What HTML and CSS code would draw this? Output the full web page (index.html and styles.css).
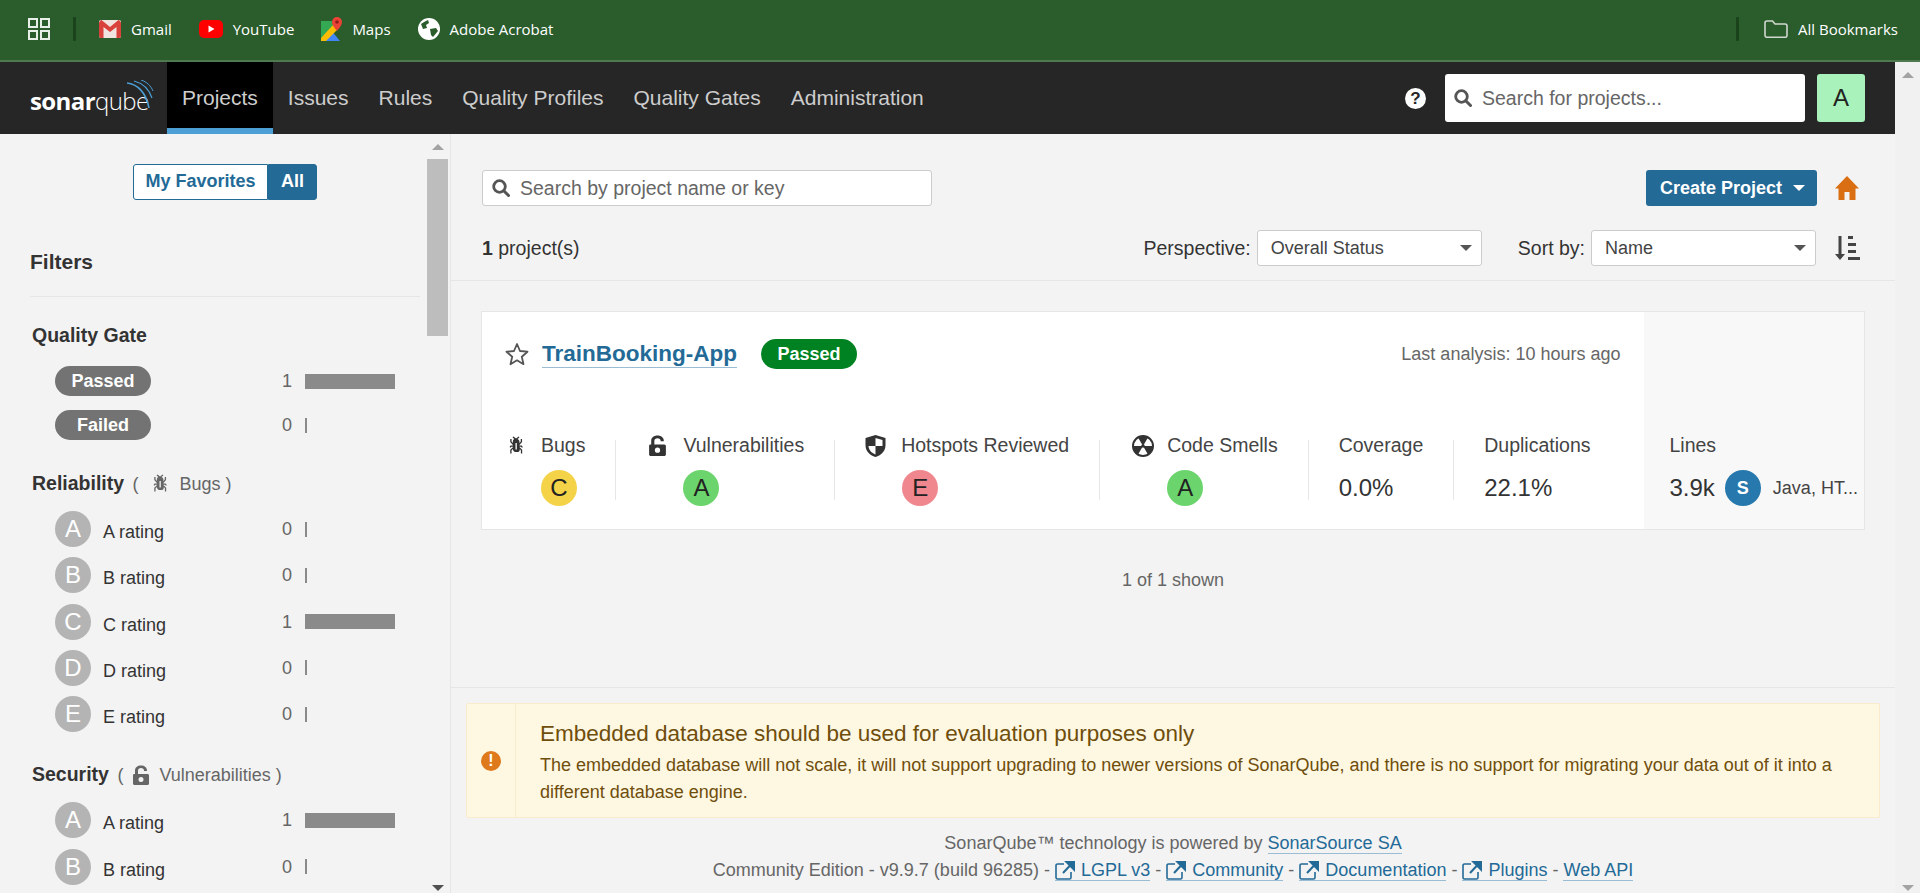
FILE: index.html
```html
<!DOCTYPE html>
<html lang="en">
<head>
    <meta charset="UTF-8">
    <meta name="viewport" content="width=device-width, initial-scale=1.0">
    <title>Projects - SonarQube</title>
    <link rel="stylesheet" href="styles.css">
</head>
<body>
    <svg class="sprite" aria-hidden="true">
        <symbol id="bug" viewBox="0 0 16 16"><path d="M11 9h1.3l.5.8.8-.5-.8-1.3H11v-.3l2-2.3V3h-1v2l-1 1.2V5c-.1-.8-.7-1.5-1.4-1.9L11 1.8l-.7-.7-1.8 1.6-2.1-1.6-.7.7 1.3 1.3C6.4 3.5 6 4.2 6 5v1.1L5 5V3H4v2.3l2 2.3V8H4.2l-.7 1.2.8.5.5-.7H6v.3l-2 1.9V14h1v-2.4l1-1C6 12 7.1 13 8.4 13h.8c.7 0 1.4-.3 1.8-.9.3-.4.3-.9.2-1.4l.9.9V14h1v-2.8l-2-1.9V9zm-2 2H8V6h1v5z"/></symbol>
        <symbol id="lock" viewBox="0 0 16 20"><path fill-rule="evenodd" d="M1 9h1V5.5C2 2.5 4.500 .5 8 .5s6 2 6 5V6h-3v-.5C11 4 9.800 3 8 3S5 4 5 5.500V9h9.500c.8 0 1.500 .7 1.500 1.500v8c0 .8-.7 1.500-1.500 1.500h-13C.7 20 0 19.300 0 18.500v-8C0 9.700 .3 9 1 9zm7 3a2.500 2.500 0 1 0 0 5 2.500 2.500 0 0 0 0-5z"/></symbol>
        <symbol id="search" viewBox="0 0 18 18"><circle cx="7.500" cy="7.500" r="5.800" fill="none" stroke="currentColor" stroke-width="2.800"/><path d="M12 12l4.500 4.500" stroke="currentColor" stroke-width="3" stroke-linecap="round"/></symbol>
        <symbol id="external" viewBox="0 0 20 20"><path d="M9 4H2.500A1.500 1.500 0 0 0 1 5.500v12A1.500 1.500 0 0 0 2.500 19h12a1.500 1.500 0 0 0 1.500-1.500V12" fill="none" stroke="currentColor" stroke-width="1.600"/><path d="M8 13l8-8.500M11.500 2H19v7.500z" fill="currentColor" stroke="currentColor" stroke-width="2"/></symbol>
    </svg>

    <div class="bookmarks">
        <svg class="bm-apps" viewBox="0 0 22 22" width="22" height="22" fill="none" stroke="#e8efe8" stroke-width="2"><rect x="1" y="1" width="8" height="8"/><rect x="13" y="1" width="8" height="8"/><rect x="1" y="13" width="8" height="8"/><rect x="13" y="13" width="8" height="8"/></svg>
        <span class="bm-sep"></span>
        <a class="bm-item">
            <svg viewBox="0 0 22 18" width="22" height="18"><rect width="22" height="18" rx="2" fill="#f1e3e0"/><path d="M0 2.500v13.500a2 2 0 0 0 2 2h2.500V7L11 12l6.500-5v11H20a2 2 0 0 0 2-2V2.500L20 0h-.500L11 7 2.500 0H2z" fill="#d9423a"/></svg>
            <span>Gmail</span>
        </a>
        <a class="bm-item">
            <svg viewBox="0 0 24 18" width="24" height="18"><rect width="24" height="18" rx="5" fill="#f00"/><path d="M9.500 5.500l6 3.500-6 3.500z" fill="#fff"/></svg>
            <span>YouTube</span>
        </a>
        <a class="bm-item">
            <svg viewBox="0 0 21 24" width="21" height="24"><path d="M0 4h13v20H0z" fill="#34a853"/><path d="M0 24l10-11 9 11z" fill="#4285f4"/><path d="M0 21L12 8l4 5L5 24H0z" fill="#fbbc04"/><path d="M16 0a5 5 0 0 0-5 5c0 3.500 5 9 5 9s5-5.500 5-9a5 5 0 0 0-5-5z" fill="#ea4335"/><circle cx="16" cy="5" r="1.800" fill="#8f1f18"/></svg>
            <span>Maps</span>
        </a>
        <a class="bm-item">
            <svg viewBox="0 0 22 22" width="22" height="22"><circle cx="11" cy="11" r="11" fill="#fff"/><path d="M3 6c2-1 4-3 7-4l1 3-3 2 1 3-4 1zM12 11l6-1 2 3-5 6-2-2z" fill="#2a5c2c"/></svg>
            <span>Adobe Acrobat</span>
        </a>
        <span class="bm-sep bm-sep-right"></span>
        <a class="bm-item">
            <svg viewBox="0 0 24 18" width="24" height="18" fill="none" stroke="#cfd8cf" stroke-width="1.600"><path d="M1 3a2 2 0 0 1 2-2h5.500l2.500 3h10a2 2 0 0 1 2 2v9.500a1.800 1.800 0 0 1-2 1.800H3a2 2 0 0 1-2-2z"/></svg>
            <span>All Bookmarks</span>
        </a>
    </div>

    <div class="window">
        <div class="page">
            <nav class="navbar">
                <a class="logo">
                    <span class="logo-text"><b>sonar</b><span>qube</span></span>
                    <svg class="logo-waves" viewBox="0 0 27 28" width="27" height="28" fill="none" stroke="#4b9fd5"><path d="M0 3c10 1 19 9 22 25" stroke-width="1.600"/><path d="M7 1c8 2 15 8 18 17" stroke-width="1.200"/><path d="M14 0c6 2 10 6 12 11" stroke-width="1"/></svg>
                </a>
                <a class="tab active">Projects</a>
                <a class="tab">Issues</a>
                <a class="tab">Rules</a>
                <a class="tab">Quality Profiles</a>
                <a class="tab">Quality Gates</a>
                <a class="tab">Administration</a>
                <div class="nav-right">
                    <span class="help">?</span>
                    <div class="nav-search">
                        <svg width="18" height="18"><use href="#search"/></svg>
                        <span>Search for projects...</span>
                    </div>
                    <span class="avatar">A</span>
                </div>
            </nav>

            <div class="layout">
                <aside class="sidebar">
                    <div class="toggle">
                        <a class="toggle-btn">My Favorites</a>
                        <a class="toggle-btn on">All</a>
                    </div>
                    <h2 class="filters-title">Filters</h2>

                    <h3 class="facet-title facet-first">Quality Gate</h3>
                    <ul class="facet">
                        <li class="row row-pill">
                            <span class="row-name"><span class="pill">Passed</span></span>
                            <span class="count">1</span><span class="bar-slot"><i class="bar" style="width: 90px"></i></span>
                        </li>
                        <li class="row row-pill">
                            <span class="row-name"><span class="pill">Failed</span></span>
                            <span class="count">0</span><span class="bar-slot"><i class="bar" style="width: 2px"></i></span>
                        </li>
                    </ul>

                    <h3 class="facet-title facet-reliability">Reliability <span class="facet-sub">( <svg class="sub-icon" width="21" height="21"><use href="#bug"/></svg> Bugs )</span></h3>
                    <ul class="facet">
                        <li class="row"><span class="row-name"><span class="grade">A</span><span class="row-label">A rating</span></span><span class="count">0</span><span class="bar-slot"><i class="bar" style="width: 2px"></i></span></li>
                        <li class="row"><span class="row-name"><span class="grade">B</span><span class="row-label">B rating</span></span><span class="count">0</span><span class="bar-slot"><i class="bar" style="width: 2px"></i></span></li>
                        <li class="row"><span class="row-name"><span class="grade">C</span><span class="row-label">C rating</span></span><span class="count">1</span><span class="bar-slot"><i class="bar" style="width: 90px"></i></span></li>
                        <li class="row"><span class="row-name"><span class="grade">D</span><span class="row-label">D rating</span></span><span class="count">0</span><span class="bar-slot"><i class="bar" style="width: 2px"></i></span></li>
                        <li class="row"><span class="row-name"><span class="grade">E</span><span class="row-label">E rating</span></span><span class="count">0</span><span class="bar-slot"><i class="bar" style="width: 2px"></i></span></li>
                    </ul>

                    <h3 class="facet-title facet-security">Security <span class="facet-sub">( <svg class="sub-icon" width="16" height="20"><use href="#lock"/></svg> Vulnerabilities )</span></h3>
                    <ul class="facet">
                        <li class="row"><span class="row-name"><span class="grade">A</span><span class="row-label">A rating</span></span><span class="count">1</span><span class="bar-slot"><i class="bar" style="width: 90px"></i></span></li>
                        <li class="row"><span class="row-name"><span class="grade">B</span><span class="row-label">B rating</span></span><span class="count">0</span><span class="bar-slot"><i class="bar" style="width: 2px"></i></span></li>
                        <li class="row"><span class="row-name"><span class="grade">C</span><span class="row-label">C rating</span></span><span class="count">0</span><span class="bar-slot"><i class="bar" style="width: 2px"></i></span></li>
                    </ul>

                    <div class="side-scroll">
                        <i class="arrow-up"></i>
                        <i class="thumb"></i>
                        <i class="arrow-down dark"></i>
                    </div>
                </aside>

                <main class="content">
                    <header class="page-head">
                        <div class="head-row">
                            <div class="search">
                                <svg width="18" height="18"><use href="#search"/></svg>
                                <span>Search by project name or key</span>
                            </div>
                            <a class="create">Create Project <i class="caret"></i></a>
                            <svg class="home" viewBox="0 0 24 24" width="24" height="24"><path d="M12 0L0 12.500h3.500V24h6v-8h5v8h6V12.500H24z" fill="#d96e12"/></svg>
                        </div>
                        <div class="head-row head-row-2">
                            <span class="total"><b>1</b> project(s)</span>
                            <label class="select-label">Perspective:</label>
                            <div class="select">Overall Status <i class="caret"></i></div>
                            <label class="select-label label-sort">Sort by:</label>
                            <div class="select">Name <i class="caret"></i></div>
                            <svg class="sort" viewBox="0 0 25 24" width="25" height="24" fill="#444"><path d="M3.500 0h3v18h3.500L5 24 0 18h3.500zM13 0h5v3h-5zM13 7h8v3h-8zM13 14h8v3h-8zM13 21h12v3H13z"/></svg>
                        </div>
                    </header>

                    <article class="card">
                        <div class="card-main">
                            <div class="card-top">
                                <svg class="star" viewBox="0 0 24 24" width="24" height="24"><path d="M12 2l3 7 7.500 .7-5.700 5 1.700 7.500L12 18.300l-6.500 3.900 1.700-7.500-5.700-5L9 9z" fill="none" stroke="#555" stroke-width="1.800" stroke-linejoin="round"/></svg>
                                <a class="card-title">TrainBooking-App</a>
                                <span class="pill pill-ok">Passed</span>
                                <span class="last">Last analysis: 10 hours ago</span>
                            </div>
                            <div class="measures">
                                <div class="measure measure-first">
                                    <div class="measure-label"><svg width="21" height="21"><use href="#bug"/></svg><span>Bugs</span></div>
                                    <div class="measure-value"><span class="score score-c">C</span></div>
                                </div>
                                <i class="measure-sep"></i>
                                <div class="measure">
                                    <div class="measure-label"><svg class="icon-lock" width="17" height="21"><use href="#lock"/></svg><span>Vulnerabilities</span></div>
                                    <div class="measure-value"><span class="score score-a">A</span></div>
                                </div>
                                <i class="measure-sep"></i>
                                <div class="measure">
                                    <div class="measure-label"><svg viewBox="0 0 20 22" width="20" height="22"><path fill-rule="evenodd" d="M10 0l10 3v7c0 6-4 10-10 12C4 20 0 16 0 10V3zm0 3v8H3c.3 4 3 7 7 8.500V11h7V5z" fill="#333"/></svg><span>Hotspots Reviewed</span></div>
                                    <div class="measure-value"><span class="score score-e">E</span></div>
                                </div>
                                <i class="measure-sep"></i>
                                <div class="measure">
                                    <div class="measure-label"><svg class="icon-smell" viewBox="0 0 22 22" width="22" height="22"><circle cx="11" cy="11" r="10" fill="#fff" stroke="#333" stroke-width="2"/><path d="M11 11L6 2.500a10 10 0 0 1 10 0zM11 11h10a10 10 0 0 1-5 8.500zM11 11l-5 8.500A10 10 0 0 1 1 11z" fill="#333"/><circle cx="11" cy="11" r="1.800" fill="#333"/></svg><span>Code Smells</span></div>
                                    <div class="measure-value"><span class="score score-a">A</span></div>
                                </div>
                                <i class="measure-sep"></i>
                                <div class="measure">
                                    <div class="measure-label"><span>Coverage</span></div>
                                    <div class="measure-value measure-num">0.0%</div>
                                </div>
                                <i class="measure-sep"></i>
                                <div class="measure">
                                    <div class="measure-label"><span>Duplications</span></div>
                                    <div class="measure-value measure-num">22.1%</div>
                                </div>
                            </div>
                        </div>
                        <div class="card-side">
                            <div class="measure-label"><span>Lines</span></div>
                            <div class="measure-value measure-num">3.9k <span class="size">S</span> <span class="langs">Java, HT...</span></div>
                        </div>
                    </article>

                    <p class="shown">1 of 1 shown</p>

                    <div class="page-foot">
                        <div class="alert">
                            <div class="alert-icon"><span class="alert-mark">!</span></div>
                            <div class="alert-body">
                                <h4>Embedded database should be used for evaluation purposes only</h4>
                                <p>The embedded database will not scale, it will not support upgrading to newer versions of SonarQube, and there is no support for migrating your data out of it into a different database engine.</p>
                            </div>
                        </div>
                        <footer class="footer">
                            <div>SonarQube™ technology is powered by <a class="link">SonarSource SA</a></div>
                            <div>Community Edition - v9.9.7 (build 96285) - <a class="link"><svg width="20" height="20"><use href="#external"/></svg>LGPL v3</a> - <a class="link"><svg width="20" height="20"><use href="#external"/></svg>Community</a> - <a class="link"><svg width="20" height="20"><use href="#external"/></svg>Documentation</a> - <a class="link"><svg width="20" height="20"><use href="#external"/></svg>Plugins</a> - <a class="link">Web API</a></div>
                        </footer>
                    </div>
                </main>
            </div>
        </div>
        <div class="page-scroll">
            <i class="arrow-up"></i>
            <i class="arrow-down"></i>
        </div>
    </div>
</body>
</html>
```

FILE: styles.css
```css
* {
    box-sizing: border-box;
}
html,
body {
    margin: 0;
    height: 893px;
    overflow: hidden;
}
body {
    font-family: "Liberation Sans", Arial, sans-serif;
    font-size: 19.5px;
    color: #333;
    background-color: #f3f3f3;
}
ul {
    list-style: none;
    margin: 0;
    padding: 0;
}
h2,
h3,
h4,
p {
    margin: 0;
}
.sprite {
    display: none;
}

/* browser bookmarks bar */
.bookmarks {
    display: flex;
    align-items: center;
    height: 62px;
    padding-left: 28px;
    padding-bottom: 2px;
    background-color: #2a5c2c;
    border-bottom: 2px solid #4f7a50;
    font-family: "Open Sans", sans-serif;
    font-size: 15px;
    color: #fff;
}
.bm-sep {
    width: 3px;
    height: 24px;
    margin: 0 23px 0 23px;
    border-radius: 1px;
    background-color: #1a431c;
}
.bm-sep-right {
    margin-left: auto;
    margin-right: 25px;
}
.bm-item {
    display: flex;
    align-items: center;
    gap: 10px;
    margin-right: 27px;
}
.bm-item:last-child {
    margin-right: 22px;
}

.window {
    display: flex;
    height: 831px;
}
.page {
    flex: 1;
    min-width: 0;
    display: flex;
    flex-flow: column;
}
.page-scroll {
    width: 25px;
    display: flex;
    flex-flow: column;
    justify-content: space-between;
    align-items: center;
    padding: 10px 0 2px;
    background-color: #f1f1f1;
}
.arrow-up,
.arrow-down {
    display: block;
    width: 0;
    height: 0;
    border-left: 6px solid transparent;
    border-right: 6px solid transparent;
}
.arrow-up {
    border-bottom: 6px solid #a3a3a3;
}
.arrow-down {
    border-top: 6px solid #a3a3a3;
}
.arrow-down.dark {
    border-top-color: #505050;
}

/* sonarqube nav */
.navbar {
    display: flex;
    align-items: stretch;
    height: 72px;
    background-color: #262626;
    font-size: 21px;
    color: #cdcdcd;
}
.logo {
    position: relative;
    width: 167px;
    padding: 24px 0 0 30px;
    color: #fff;
}
.logo-text {
    font-family: "Open Sans", sans-serif;
    font-size: 24px;
    line-height: 30px;
    letter-spacing: -0.6px;
}
.logo-text span {
    font-weight: 300;
}
.logo-waves {
    position: absolute;
    left: 127px;
    top: 18px;
}
.tab {
    display: flex;
    align-items: center;
    padding: 0 15px;
    border-bottom: 6px solid transparent;
    padding-top: 6px;
}
.tab.active {
    background-color: #000;
    border-bottom-color: #4b9fd5;
}
.nav-right {
    margin-left: auto;
    display: flex;
    align-items: center;
    padding-right: 30px;
}
.help {
    width: 21px;
    height: 21px;
    border-radius: 50%;
    margin-right: 19px;
    background-color: #fff;
    color: #262626;
    font-size: 17px;
    font-weight: bold;
    line-height: 21px;
    text-align: center;
}
.nav-search {
    display: flex;
    align-items: center;
    gap: 10px;
    width: 360px;
    height: 48px;
    padding-left: 9px;
    background-color: #fff;
    border-radius: 3px;
    font-size: 19.5px;
    color: #666;
}
.nav-search svg,
.search svg {
    color: #555;
}
.avatar {
    width: 48px;
    height: 48px;
    margin-left: 12px;
    border-radius: 3px;
    background-color: #aaf2bb;
    color: #222;
    font-size: 24px;
    line-height: 48px;
    text-align: center;
}

.layout {
    flex: 1;
    min-height: 0;
    display: grid;
    grid-template-columns: 451px 1fr;
}

/* filters */
.sidebar {
    position: relative;
    overflow: hidden;
    padding: 30px 30px 0;
    border-right: 1px solid #e6e6e6;
}
.toggle {
    display: flex;
    justify-content: center;
    font-size: 18px;
    font-weight: bold;
    line-height: 36px;
    color: #236a97;
}
.toggle-btn {
    width: 135px;
    height: 36px;
    border: 1.5px solid #236a97;
    border-radius: 3px 0 0 3px;
    background-color: #fff;
    line-height: 33px;
    text-align: center;
}
.toggle-btn.on {
    width: 49px;
    border-radius: 0 3px 3px 0;
    background-color: #236a97;
    color: #fff;
}
.filters-title {
    margin-top: 47px;
    padding-bottom: 19px;
    border-bottom: 1px solid #e6e6e6;
    font-size: 21px;
    line-height: 30px;
}
.facet-title {
    padding-left: 2px;
    font-size: 19.5px;
    line-height: 30px;
}
.facet-first {
    margin: 23px 0 16px;
}
.facet-reliability {
    margin: 14px 0 12px;
}
.facet-security {
    margin: 17px 0 12px;
}
.facet-sub {
    margin-left: 3px;
    font-size: 18px;
    font-weight: normal;
    color: #666;
}
.sub-icon {
    margin: 0 5px;
    fill: #666;
    vertical-align: -4px;
}
.row {
    display: flex;
    align-items: center;
    height: 46.25px;
    padding: 0 25px;
    font-size: 18px;
}
.row-pill {
    height: 44px;
    align-items: flex-start;
    padding-top: 0;
    line-height: 30px;
}
.row:not(.row-pill) {
    align-items: flex-start;
    line-height: 36px;
}
.row-name {
    flex: 1;
    display: flex;
    gap: 12px;
}
.row-label {
    padding-top: 3px;
}
.count {
    width: 12px;
    margin-right: 13px;
    color: #666;
    text-align: right;
}
.bar-slot {
    width: 90px;
    height: 100%;
}
.bar {
    display: block;
    height: 15px;
    margin-top: 10.5px;
    background-color: #8a8a8a;
}
.row-pill .bar {
    margin-top: 8px;
}
.pill {
    display: inline-block;
    width: 96px;
    height: 30px;
    border-radius: 15px;
    background-color: #737373;
    color: #fff;
    font-size: 18px;
    font-weight: bold;
    line-height: 30px;
    text-align: center;
}
.pill-ok {
    background-color: #008223;
}
.grade {
    width: 36px;
    height: 36px;
    border-radius: 50%;
    background-color: #b4b4b4;
    color: #fff;
    font-size: 24px;
    line-height: 36px;
    text-align: center;
}
.side-scroll {
    position: absolute;
    top: 0;
    bottom: 0;
    left: 427px;
    width: 21px;
    display: flex;
    flex-flow: column;
    align-items: center;
    padding: 10px 0 2px;
}
.thumb {
    display: block;
    width: 21px;
    height: 177px;
    margin: 9px 0 auto;
    background-color: #bdbdbd;
}

/* main column */
.content {
    min-width: 0;
}
.page-head {
    height: 147px;
    padding: 36px 30px 0;
    border-bottom: 1px solid #e6e6e6;
}
.head-row {
    display: flex;
    align-items: center;
    height: 36px;
    padding-left: 1px;
}
.head-row-2 {
    margin-top: 24px;
}
.search {
    display: flex;
    align-items: center;
    gap: 10px;
    width: 450px;
    height: 36px;
    padding-left: 9px;
    margin-right: auto;
    background-color: #fff;
    border: 1.5px solid #ccc;
    border-radius: 3px;
    color: #666;
}
.create {
    display: flex;
    align-items: center;
    justify-content: space-between;
    width: 171px;
    height: 36px;
    padding: 0 12px 0 14px;
    border-radius: 3px;
    background-color: #236a97;
    color: #fff;
    font-size: 18px;
    font-weight: bold;
}
.caret {
    display: block;
    width: 0;
    height: 0;
    border-left: 6px solid transparent;
    border-right: 6px solid transparent;
    border-top: 6px solid #fff;
}
.home {
    margin: 0 6px 0 18px;
}
.total {
    margin-right: auto;
}
.select-label {
    margin-right: 6px;
}
.label-sort {
    margin-left: 36px;
}
.select {
    display: flex;
    align-items: center;
    justify-content: space-between;
    width: 225px;
    height: 36px;
    padding: 0 9px 0 13px;
    background-color: #fff;
    border: 1.5px solid #ccc;
    border-radius: 3px;
    color: #444;
    font-size: 18px;
}
.select .caret {
    border-top-color: #555;
}
.sort {
    margin: 0 5px 0 19px;
}

/* project card */
.card {
    display: flex;
    height: 219px;
    margin: 30px 30px 0;
    background-color: #fff;
    border: 1px solid #e6e6e6;
}
.card-main {
    flex: 1;
    padding: 27px 24px 0 23px;
}
.card-top {
    display: flex;
    align-items: center;
    height: 30px;
}
.star {
    margin-right: 13px;
}
.card-title {
    margin-right: 24px;
    border-bottom: 1.5px solid #9bbdd3;
    color: #236a97;
    font-size: 22.5px;
    font-weight: bold;
    line-height: 26px;
}
.last {
    margin-left: auto;
    color: #666;
    font-size: 18px;
}
.measures {
    display: flex;
    margin-top: 63px;
}
.measure {
    padding: 0 30px;
}
.measure-first {
    padding-left: 0;
}
.measure-sep {
    width: 1px;
    height: 60px;
    margin-top: 8px;
    background-color: #e6e6e6;
}
.measure-label {
    display: flex;
    align-items: center;
    height: 27px;
    color: #444;
    white-space: nowrap;
}
.measure-label svg {
    width: 21px;
    margin-right: 15px;
    fill: #333;
}
.measure-label .icon-lock {
    margin-left: 3px;
    margin-right: 17px;
    width: 17px;
}
.measure-label .icon-smell {
    width: 22px;
    margin-left: 2px;
    margin-right: 13px;
}
.measure-value {
    margin-top: 11px;
    height: 36px;
    line-height: 36px;
    white-space: nowrap;
}
.measure-label svg + span {
    display: block;
}
.measure:not(.measure-first) .measure-value:not(.measure-num) {
    padding-left: 37px;
}
.measure-first .measure-value {
    padding-left: 36px;
}
.measure-num {
    font-size: 24px;
    color: #333;
}
.score {
    display: block;
    width: 36px;
    height: 36px;
    border-radius: 50%;
    color: #222;
    font-size: 24px;
    text-align: center;
}
.score-a {
    background-color: #6cd46c;
}
.score-c {
    background-color: #f4d348;
}
.score-e {
    background-color: #f0878e;
}
.card-side {
    width: 256px;
    padding: 120px 0 0 25px;
    background-color: #f8f8f8;
}
.card-side .measure-num {
    display: flex;
    align-items: center;
}
.size {
    width: 36px;
    height: 36px;
    margin: 0 12px 0 10px;
    border-radius: 50%;
    background-color: #2678ad;
    color: #fff;
    font-size: 18px;
    font-weight: bold;
    text-align: center;
}
.langs {
    color: #444;
    font-size: 18px;
}
.shown {
    margin-top: 37px;
    color: #666;
    font-size: 18px;
    line-height: 27px;
    text-align: center;
}

/* bottom */
.page-foot {
    margin-top: 93px;
    border-top: 1px solid #e6e6e6;
}
.alert {
    display: flex;
    height: 115px;
    margin: 15px 15px 0;
    background-color: #fef7e2;
    border: 1px solid #faebcc;
    border-radius: 2px;
    color: #6f4e0c;
}
.alert-icon {
    display: flex;
    align-items: center;
    justify-content: center;
    width: 49px;
    border-right: 1px solid #faebcc;
}
.alert-mark {
    width: 20px;
    height: 20px;
    border-radius: 50%;
    background-color: #de7a1c;
    color: #fff;
    font-size: 16px;
    font-weight: bold;
    line-height: 20px;
    text-align: center;
}
.alert-body {
    flex: 1;
    padding: 15px 24px 0;
}
.alert-body h4 {
    font-size: 22.500px;
    font-weight: normal;
    line-height: 30px;
}
.alert-body p {
    margin-top: 3px;
    font-size: 18px;
    line-height: 27px;
}
.footer {
    padding-top: 12px;
    color: #666;
    font-size: 18px;
    line-height: 27px;
    text-align: center;
}
.link {
    border-bottom: 1.5px solid #9bbdd3;
    color: #236a97;
}
.link svg {
    margin-right: 6px;
    vertical-align: -4px;
}
```
